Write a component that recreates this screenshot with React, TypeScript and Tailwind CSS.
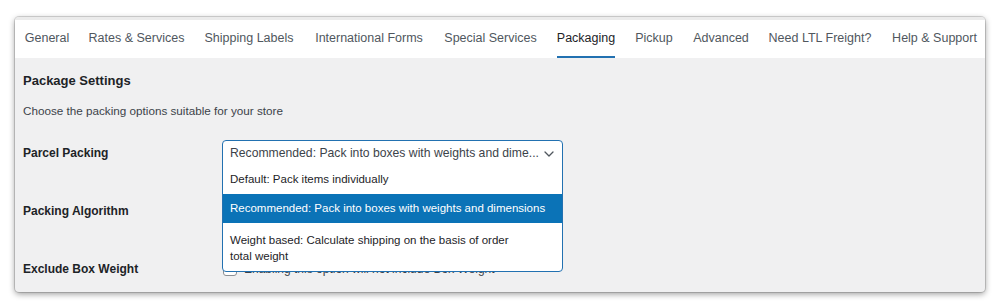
import React from 'react';

// widths taken from the tab strip so the labels land where they should
const tabs = [
  { label: 'General', w: 'w-[44px]' },
  { label: 'Rates & Services', w: 'w-[95px]' },
  { label: 'Shipping Labels', w: 'w-[90px]' },
  { label: 'International Forms', w: 'w-[110px]' },
  { label: 'Special Services', w: 'w-[93px]' },
  { label: 'Packaging', w: 'w-[58px]' },
  { label: 'Pickup', w: 'w-[38px]' },
  { label: 'Advanced', w: 'w-[56px]' },
  { label: 'Need LTL Freight?', w: 'w-[102px]' },
  { label: 'Help & Support', w: 'w-[87px]' },
];

const font = { fontFamily: '"Liberation Sans", Arial, sans-serif' };

const ChevronDown = () => (
  <svg width="10" height="6" viewBox="0 0 10 6" fill="none" className="text-[#50575e]">
    <path d="M1 1l4 4 4-4" stroke="currentColor" strokeWidth="1.3" strokeLinecap="round" strokeLinejoin="round" />
  </svg>
);

const ParcelSelect: React.FC = () => (
  <div className="relative h-[26px] w-[341px]">
    {/* open native-style list, drawn over the rows below */}
    <div className="absolute left-0 top-0 z-10 w-full overflow-hidden whitespace-nowrap rounded-[4px] border border-[#2271b1] bg-white text-[11.5px] text-[#1d2327]">
      <div className="flex h-[25px] items-center justify-between pl-[7px] pr-[8px] text-[12.2px] text-[#3c434a]">
        <span>Recommended: Pack into boxes with weights and dime...</span>
        <ChevronDown />
      </div>
      <div className="pl-[7px] pt-[5px] pb-[7px] leading-4">Default: Pack items individually</div>
      <div className="flex h-[29px] items-center bg-[#0b73b7] pl-[7px] text-white">
        Recommended: Pack into boxes with weights and dimensions
      </div>
      <div className="pl-[7px] pt-[9px] pb-[7px] leading-4">
        Weight based: Calculate shipping on the basis of order
        <br />
        total weight
      </div>
    </div>
  </div>
);

export default function App() {
  return (
    <div className="h-[308px] w-[1000px] bg-white px-[15px] pt-[17px]" style={font}>
      <div className="h-[275px] w-[970px] overflow-hidden rounded-[4px] bg-[#f0f0f1] shadow-[0_0_0_1px_rgba(0,0,0,0.14),0_2px_6px_rgba(0,0,0,0.4)]">
        <div className="h-[3px] bg-[#ebebeb]" />
        <nav className="flex h-[38px] gap-5 whitespace-nowrap bg-white pl-[10px] text-[12.5px] text-[#50575e]">
          {tabs.map((t) => (
            <div
              key={t.label}
              className={
                t.label === 'Packaging'
                  ? `${t.w} flex items-center justify-center border-b-2 border-[#2271b1] text-[#1d2327]`
                  : `${t.w} flex items-center justify-center border-b-2 border-transparent`
              }
            >
              {t.label}
            </div>
          ))}
        </nav>

        <div className="whitespace-nowrap px-[8px] pt-[14px] text-[#1d2327]">
          <h2 className="text-[13px] font-bold leading-[18px]">Package Settings</h2>
          <p className="mt-[13px] text-[11.7px] leading-4 text-[#3c434a]">
            Choose the packing options suitable for your store
          </p>

          <div className="mt-[5px]">
            <div className="flex h-[58px] items-center">
              <div className="w-[199px] text-[12px] font-bold">Parcel Packing</div>
              <ParcelSelect />
            </div>
            <div className="flex h-[58px] items-center">
              <div className="w-[199px] text-[12px] font-bold">Packing Algorithm</div>
              <div className="h-[26px] w-[341px] rounded-[4px] border border-[#8c8f94] bg-white" />
            </div>
            <div className="flex h-[58px] items-center">
              <div className="w-[199px] text-[12px] font-bold">Exclude Box Weight</div>
              <label className="flex items-center gap-[7px] text-[12px] text-[#3c434a]">
                <span className="ml-[1px] h-[14px] w-[14px] rounded-[3px] border border-[#8c8f94] bg-white" />
                Enabling this option will not include Box Weight
              </label>
            </div>
          </div>
        </div>
      </div>
    </div>
  );
}
